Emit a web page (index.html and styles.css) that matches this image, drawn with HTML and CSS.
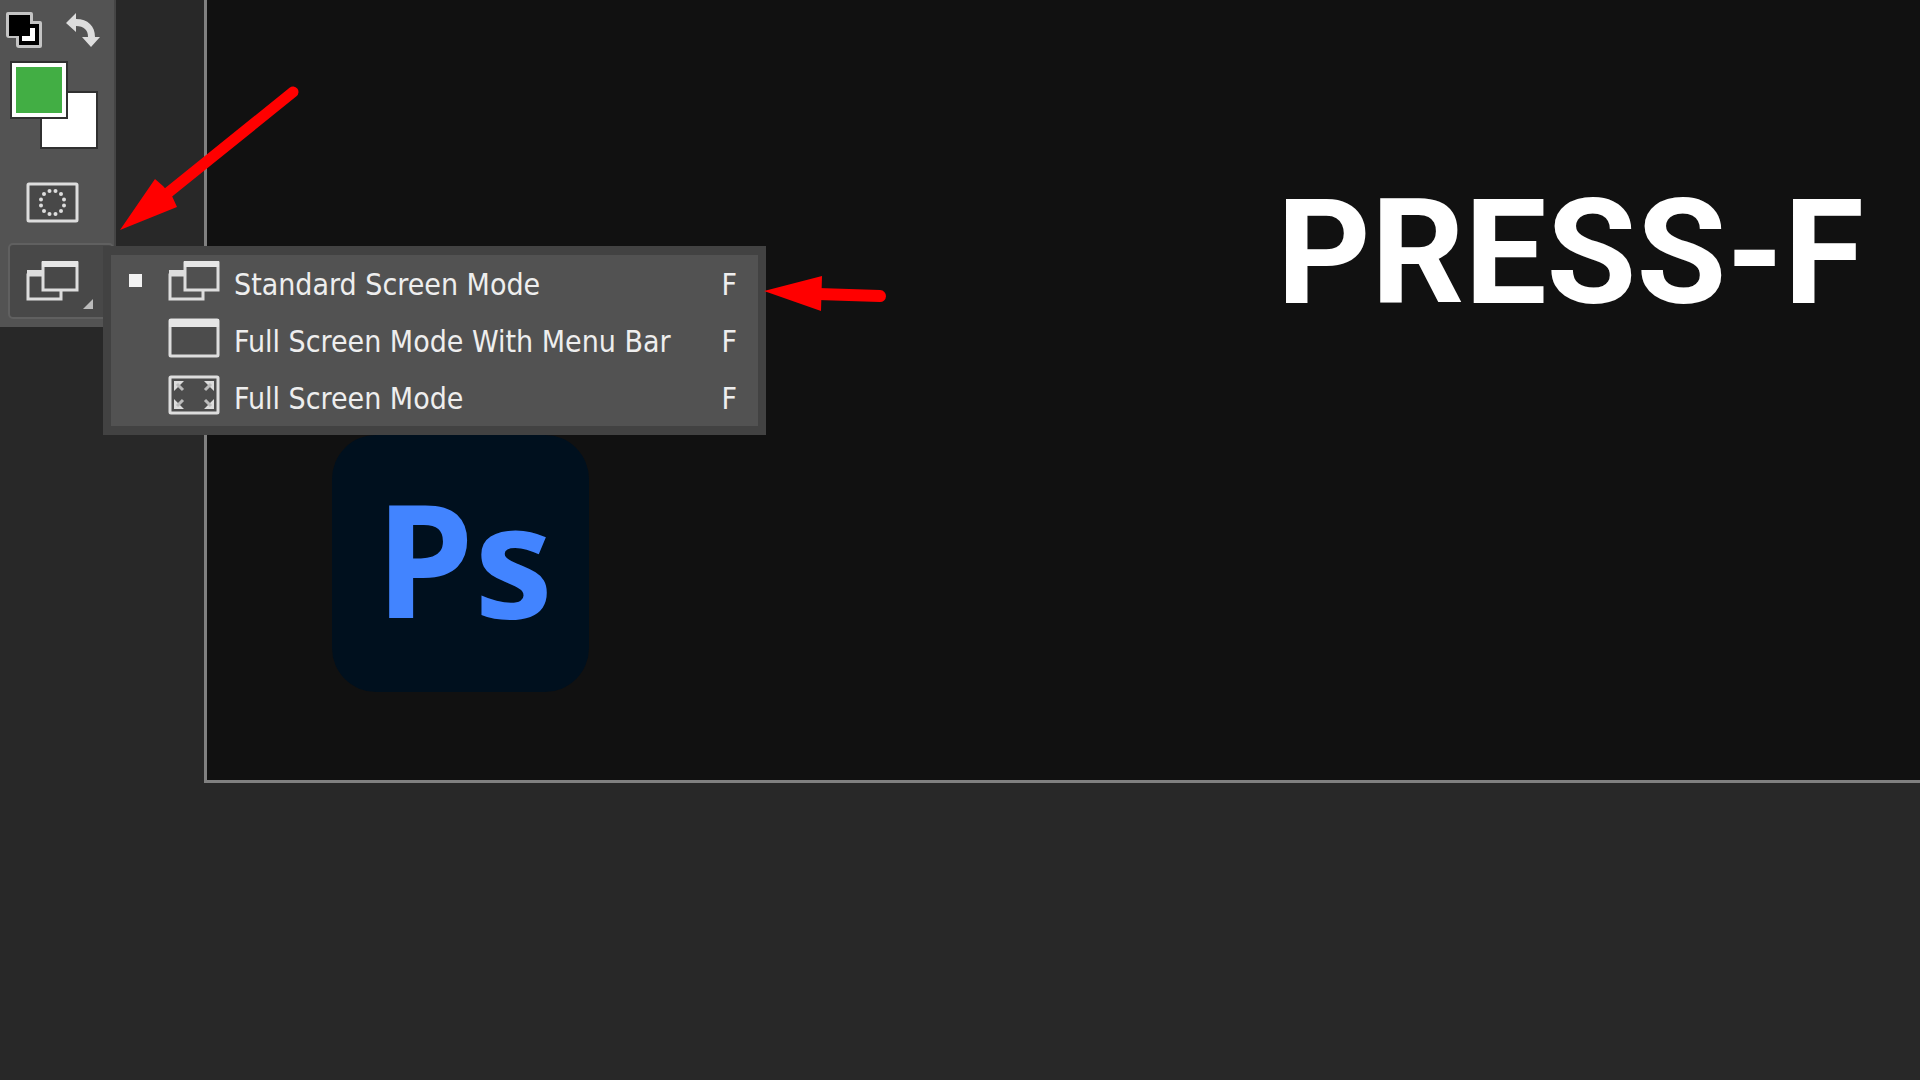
FILE: index.html
```html
<!DOCTYPE html>
<html lang="en">
<head>
<meta charset="utf-8">
<meta name="viewport" content="width=device-width, initial-scale=1">
<title>Screen modes</title>
<link rel="stylesheet" href="styles.css">
</head>
<body>
<div class="app">
  <aside class="toolbar">
    <div class="color-actions">
      <button class="tool" aria-label="Default colors">
        <svg width="38" height="38" viewBox="0 0 38 38"><path d="M2 0H25Q27 0 27 2V9H34Q36 9 36 11V34Q36 36 34 36H13Q10 36 10 33V26H3Q0 26 0 23V2Q0 0 2 0Z" fill="#c4c4c4"/><path d="M3 3H24V12H33V33H13V24H3Z" fill="#000"/><path d="M24 16H29V29H16V24H24Z" fill="#fff"/></svg>
      </button>
      <button class="tool" aria-label="Swap colors">
        <svg width="36" height="36" viewBox="0 0 36 36"><path d="M0 10L10 0V6C22 6 29 13 29 24H34L25 34L16 24H22C22 17 18 13 10 13V19Z" fill="#ddd"/></svg>
      </button>
    </div>
    <div class="swatches">
      <button class="swatch back" aria-label="Background color"></button>
      <button class="swatch front" aria-label="Foreground color"></button>
    </div>
    <button class="tool mask" aria-label="Quick mask">
      <svg width="53" height="41" viewBox="0 0 53 41"><rect x="2" y="2" width="49" height="37" rx="1" fill="#484848" stroke="#ddd" stroke-width="3"/><g fill="#ddd"><circle cx="29.500" cy="9" r="2"/><circle cx="35" cy="12" r="2"/><circle cx="38" cy="17.500" r="2"/><circle cx="38" cy="23.500" r="2"/><circle cx="35" cy="29" r="2"/><circle cx="29.500" cy="32" r="2"/><circle cx="23.500" cy="32" r="2"/><circle cx="18" cy="29" r="2"/><circle cx="15" cy="23.500" r="2"/><circle cx="15" cy="17.500" r="2"/><circle cx="18" cy="12" r="2"/><circle cx="23.500" cy="9" r="2"/></g></svg>
    </button>
    <div class="flyout">
      <button class="tool mode" aria-label="Change screen mode" aria-haspopup="menu" aria-expanded="true">
        <svg width="68" height="49" viewBox="0 0 68 49"><path d="M16 14H2V38H35V30" fill="none" stroke="#ddd" stroke-width="3"/><path d="M1 9H16V14H1Z" fill="#ddd"/><rect x="17" y="2" width="34" height="27" fill="#484848" stroke="#ddd" stroke-width="3"/><path d="M16 0H52V6H16Z" fill="#e6e6e6"/><path d="M67 38V48H57Z" fill="#bbb"/></svg>
      </button>
      <div class="menu" role="menu">
        <button class="item" role="menuitemradio" aria-checked="true">
          <span class="mark on"></span>
          <svg width="52" height="40" viewBox="0 0 52 40"><path d="M16 14H2V38H35V30" fill="none" stroke="#ddd" stroke-width="3"/><path d="M1 9H16V14H1Z" fill="#ddd"/><rect x="17" y="2" width="33" height="27" fill="#505050" stroke="#ddd" stroke-width="3"/><path d="M16 0H51V6H16Z" fill="#e6e6e6"/></svg>
          <span class="label">Standard Screen Mode</span><span class="key">F</span>
        </button>
        <button class="item" role="menuitemradio" aria-checked="false">
          <span class="mark"></span>
          <svg width="52" height="40" viewBox="0 0 52 40"><rect x="2" y="2" width="48" height="36" rx="1" fill="#4c4c4c" stroke="#ddd" stroke-width="3"/><path d="M1 1H51V9H1Z" fill="#e6e6e6"/></svg>
          <span class="label">Full Screen Mode With Menu Bar</span><span class="key">F</span>
        </button>
        <button class="item" role="menuitemradio" aria-checked="false">
          <span class="mark"></span>
          <svg width="52" height="40" viewBox="0 0 52 40"><rect x="2" y="2" width="48" height="36" rx="1" fill="#4c4c4c" stroke="#ddd" stroke-width="3"/><path d="M6 6H16L6 16ZM46 6H36L46 16ZM6 34H16L6 24ZM46 34H36L46 24Z" fill="#ddd"/><path d="M9 9L15 15M43 9L37 15M9 31L15 25M43 31L37 25" stroke="#bbb" stroke-width="3"/></svg>
          <span class="label">Full Screen Mode</span><span class="key">F</span>
        </button>
      </div>
    </div>
  </aside>
  <main class="workspace">
    <section class="artboard">
      <h1 class="title">PRESS-F</h1>
      <div class="logo">Ps</div>
    </section>
  </main>
  <svg class="arrows" width="900" height="330" viewBox="0 0 900 330" aria-hidden="true"><g stroke="#f00" stroke-linecap="round"><path d="M164 196L293 92" stroke-width="11"/><path d="M818 294L880 296" stroke-width="12"/></g><path d="M120 230L155 179L163 186L172 196L177 207ZM764 291L822 276L821 311Z" fill="#f00"/></svg>
</div>
</body>
</html>
```
FILE: styles.css
```css
* { box-sizing: border-box; }
body {
  margin: 0;
  background: #282828;
  color: #eee;
  font-family: "DejaVu Sans Condensed", "DejaVu Sans", sans-serif;
}
button {
  margin: 0;
  padding: 0;
  border: 0;
  background: none;
  color: inherit;
  font: inherit;
}
svg { display: block; flex: none; }
.app {
  position: relative;
  display: flex;
  align-items: flex-start;
  min-height: 100vh;
  overflow: hidden;
}
.toolbar {
  flex: none;
  width: 116px;
  padding: 12px 0 8px;
  background: #535353;
  border-right: 2px solid #454545;
}
.color-actions {
  display: flex;
  justify-content: space-between;
  padding: 0 12px 0 6px;
}
.swatches {
  display: grid;
  grid-template: 30px 58px / 30px 58px;
  margin: 11px 0 0 10px;
}
.swatch { width: 58px; height: 58px; border: 2px solid #303030; background: #fff; }
.back { grid-area: 2 / 2; }
.front { grid-area: 1 / 1; position: relative; background: #42ae44; box-shadow: inset 0 0 0 4px #fff; }
.mask { display: block; margin: 33px 0 20px 26px; }
.flyout { position: relative; padding-left: 8px; }
.mode {
  display: block;
  width: 100%;
  height: 76px;
  padding: 8px 0 0 16px;
  border: 2px solid #606060;
  border-radius: 5px;
  background: #484848;
}
.menu {
  position: absolute;
  z-index: 1;
  top: 3px;
  left: 103px;
  width: 663px;
  border: 8px solid #424242;
  border-top-width: 9px;
  border-bottom-width: 9px;
  background: #525252;
}
.item {
  display: flex;
  align-items: center;
  width: 100%;
  height: 57px;
  padding: 0 21px 6px 18px;
  font-size: 30px;
  line-height: 40px;
  text-align: left;
}
.mark { width: 13px; height: 13px; margin-right: 26px; }
.on { background: #f2f2f2; }
.label, .key { padding-top: 8px; }
.label { flex: 1; margin-left: 14px; white-space: nowrap; }
.workspace { flex: 1; min-width: 0; padding-left: 88px; }
.artboard {
  padding: 181px 56px 88px 125px;
  border: solid #808080;
  border-width: 0 0 3px 3px;
  background: #111;
}
.title {
  margin: 0;
  color: #fff;
  font: 700 146px/146px Roboto, sans-serif;
  text-align: right;
}
.logo {
  width: 257px;
  height: 257px;
  margin-top: 108px;
  padding-left: 43px;
  border-radius: 44px;
  background: #00101e;
  color: #4284ff;
  font: 700 158px/244px "Open Sans", sans-serif;
}
.arrows { position: absolute; z-index: 2; top: 0; left: 0; pointer-events: none; }
```
